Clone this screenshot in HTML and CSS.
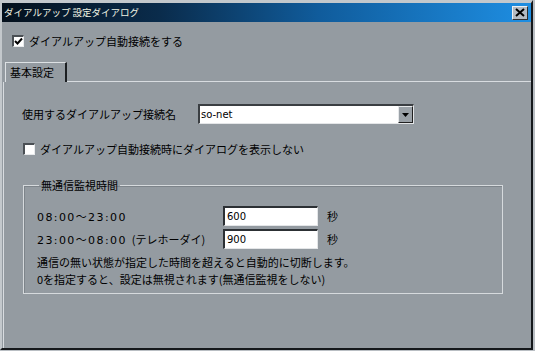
FILE: index.html
```html
<!DOCTYPE html>
<html lang="ja">
<head>
    <meta charset="UTF-8">
    <title>ダイアルアップ 設定ダイアログ</title>
    <link rel="stylesheet" href="styles.css">
</head>
<body>
    <div class="window">

        <div class="titlebar">
            <span class="title">ダイアルアップ 設定ダイアログ</span>
            <span class="close">
                <svg width="10" height="9" viewBox="0 0 10 9">
                    <path d="M1 1 L9 8 M9 1 L1 8" stroke="#000" stroke-width="2"/>
                </svg>
            </span>
        </div>

        <div class="check-row top-check">
            <span class="checkbox checked">
                <svg width="9" height="9" viewBox="0 0 9 9">
                    <path d="M1 4 L3.5 6.5 L8 1.5" fill="none" stroke="#000" stroke-width="2"/>
                </svg>
            </span>
            <span>ダイアルアップ自動接続をする</span>
        </div>

        <div class="tabs">
            <div class="tab">基本設定</div>
            <div class="tab-line"></div>
        </div>

        <div class="panel">

            <div class="field-row">
                <span class="field-label">使用するダイアルアップ接続名</span>
                <div class="select">
                    <span class="select-value">so-net</span>
                    <span class="select-btn">
                        <svg width="7" height="4" viewBox="0 0 7 4">
                            <path d="M0 0 H7 L3.5 4 Z" fill="#000"/>
                        </svg>
                    </span>
                </div>
            </div>

            <div class="check-row panel-check">
                <span class="checkbox"></span>
                <span>ダイアルアップ自動接続時にダイアログを表示しない</span>
            </div>

            <fieldset class="group">
                <legend>無通信監視時間</legend>

                <div class="time-row">
                    <span class="time-label">08:00〜23:00</span>
                    <span class="input">600</span>
                    <span class="unit">秒</span>
                </div>

                <div class="time-row">
                    <span class="time-label">23:00〜08:00 <span class="kana">(テレホーダイ)</span></span>
                    <span class="input">900</span>
                    <span class="unit">秒</span>
                </div>

                <p class="note">
                    通信の無い状態が指定した時間を超えると自動的に切断します。<br>
                    0を指定すると、設定は無視されます(無通信監視をしない)
                </p>
            </fieldset>

        </div>

    </div>
</body>
</html>
```

FILE: styles.css
```css
body {
    margin: 0;
    background-color: #b9bec3;
    font-family: "Noto Sans CJK JP", "DejaVu Sans", sans-serif;
    font-size: 11px;
    color: #000;
}

.window {
    box-sizing: border-box;
    width: 533px;
    height: 350px;
    background-color: #949ba1;
    border-top: 3px solid #c3c8cc;
    border-left: 2px solid #c3c8cc;
    border-right: 2px solid #15181b;
    border-bottom: 2px solid #15181b;
    display: flex;
    flex-direction: column;
}

.titlebar {
    height: 19px;
    display: flex;
    align-items: center;
    justify-content: space-between;
    padding: 0 1px 0 1px;
    background: linear-gradient(to right, #04101c, #0a2c4c 30%, #105c9c 60%, #1e8ee2);
}

.title {
    color: #f0f4e4;
    font-size: 9.5px;
    line-height: 19px;
    padding-left: 1px;
}

.close {
    width: 14px;
    height: 12px;
    display: flex;
    align-items: center;
    justify-content: center;
    background-color: #b4bbc2;
    border-top: 1px solid #eef0f2;
    border-left: 1px solid #eef0f2;
    border-right: 1px solid #303030;
    border-bottom: 1px solid #303030;
    margin-right: 2px;
}

.check-row {
    display: flex;
    align-items: center;
    gap: 5px;
    height: 14px;
    line-height: 14px;
}

.top-check {
    margin: 12px 0 0 10px;
}

.checkbox {
    box-sizing: border-box;
    width: 12px;
    height: 12px;
    background-color: #fff;
    border-top: 2px solid #4a4f54;
    border-left: 2px solid #4a4f54;
    border-right: 1px solid #e8eaec;
    border-bottom: 1px solid #e8eaec;
    display: flex;
    align-items: center;
    justify-content: center;
}

.tabs {
    display: flex;
    margin-top: 14px;
    margin-left: 3px;
}

.tab {
    height: 19px;
    width: 55px;
    padding-left: 4px;
    line-height: 19px;
    border-top: 1px solid #dde1e4;
    border-left: 1px solid #dde1e4;
    border-right: 2px solid #1c1f22;
}

.tab-line {
    flex: 1;
    border-bottom: 1px solid #d8dce0;
}

.panel {
    flex: 1;
    margin-left: 1px;
    border-left: 1px solid #d8dce0;
    padding-left: 18px;
}

.field-row {
    display: flex;
    align-items: center;
    margin-top: 22px;
}

.field-label {
    width: 176px;
}

.select {
    box-sizing: border-box;
    width: 216px;
    height: 20px;
    display: flex;
    background-color: #fff;
    border-top: 2px solid #3a3e42;
    border-left: 2px solid #3a3e42;
    border-right: 1px solid #e4e6e8;
    border-bottom: 1px solid #e4e6e8;
}

.select-value {
    flex: 1;
    font-family: "DejaVu Sans", sans-serif;
    font-size: 10px;
    line-height: 17px;
    padding-left: 1px;
}

.select-btn {
    box-sizing: border-box;
    width: 15px;
    display: flex;
    align-items: center;
    justify-content: center;
    background-color: #9aa1a7;
    border-top: 1px solid #e6e8ea;
    border-left: 1px solid #e6e8ea;
    border-right: 1px solid #202020;
    border-bottom: 1px solid #202020;
}

.panel-check {
    margin: 18px 0 0 1px;
}

.group {
    width: 465px;
    margin: 22px 0 0 1px;
    padding: 0 0 5px 13px;
    border: 1px solid #d6dadd;
    box-shadow: inset 1px 1px 0 #7d848a;
}

.group legend {
    padding: 0 2px;
    margin-left: 2px;
    line-height: 14px;
}

.time-row {
    display: flex;
    align-items: center;
    height: 20px;
    margin-top: 3px;
}

.time-row:first-of-type {
    margin-top: 14px;
}

.time-label {
    width: 186px;
    font-family: "DejaVu Sans", "Noto Sans CJK JP", sans-serif;
    letter-spacing: 1.4px;
}

.time-label .kana {
    font-family: "Noto Sans CJK JP", sans-serif;
    letter-spacing: 0;
}

.input {
    box-sizing: border-box;
    width: 95px;
    height: 20px;
    padding-left: 2px;
    line-height: 17px;
    font-family: "DejaVu Sans", sans-serif;
    font-size: 10px;
    background-color: #fff;
    border-top: 2px solid #2c3034;
    border-left: 2px solid #2c3034;
    border-right: 1px solid #e4e6e8;
    border-bottom: 1px solid #e4e6e8;
}

.unit {
    margin-left: 9px;
}

.note {
    margin: 5px 0 0 0;
    line-height: 17px;
}
```
